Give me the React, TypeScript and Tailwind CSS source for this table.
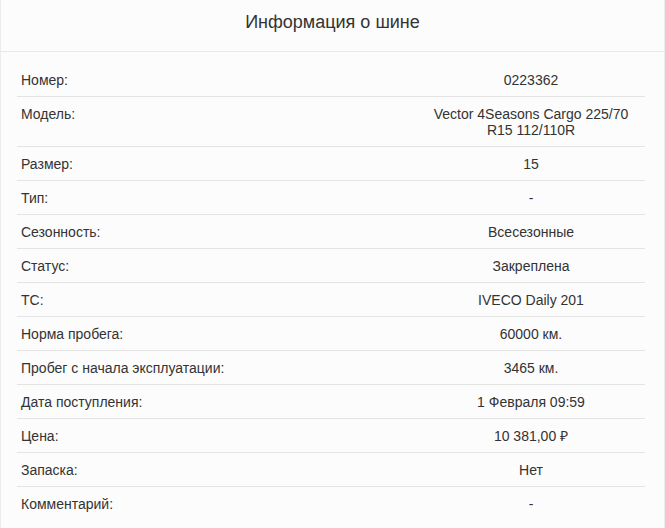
import React from "react";

const rows: { label: string; value: React.ReactNode }[] = [
  { label: "Номер:", value: "0223362" },
  {
    label: "Модель:",
    value: (
      <>
        Vector 4Seasons Cargo 225/70
        <br />
        R15 112/110R
      </>
    ),
  },
  { label: "Размер:", value: "15" },
  { label: "Тип:", value: "-" },
  { label: "Сезонность:", value: "Всесезонные" },
  { label: "Статус:", value: "Закреплена" },
  { label: "ТС:", value: "IVECO Daily 201" },
  { label: "Норма пробега:", value: "60000 км." },
  { label: "Пробег с начала эксплуатации:", value: "3465 км." },
  { label: "Дата поступления:", value: "1 Февраля 09:59" },
  { label: "Цена:", value: "10 381,00 ₽" },
  { label: "Запаска:", value: "Нет" },
  { label: "Комментарий:", value: "-" },
];

const App = () => {
  return (
    <div className="w-[665px] h-[528px] overflow-hidden bg-[#fcfcfc] border-x border-[#ececf0] font-['Liberation_Sans',Arial,sans-serif] text-[#333]">
      <div className="h-[52px] flex items-center justify-center border-b border-[#e8e8e8]">
        <h2 className="text-[18px] leading-none pb-[8px]">Информация о шине</h2>
      </div>
      <div className="pt-[11px] pl-[16px] pr-[19px]">
        {rows.map((r, i) => (
          <div
            key={i}
            className="grid grid-cols-[400px_1fr] text-[14px] leading-[16px] pt-[9px] pb-[8px] border-b border-[#e4e4e4] last:border-b-0"
          >
            <div className="pl-[4px]">{r.label}</div>
            <div className="text-center">{r.value}</div>
          </div>
        ))}
      </div>
    </div>
  );
};

export default App;
